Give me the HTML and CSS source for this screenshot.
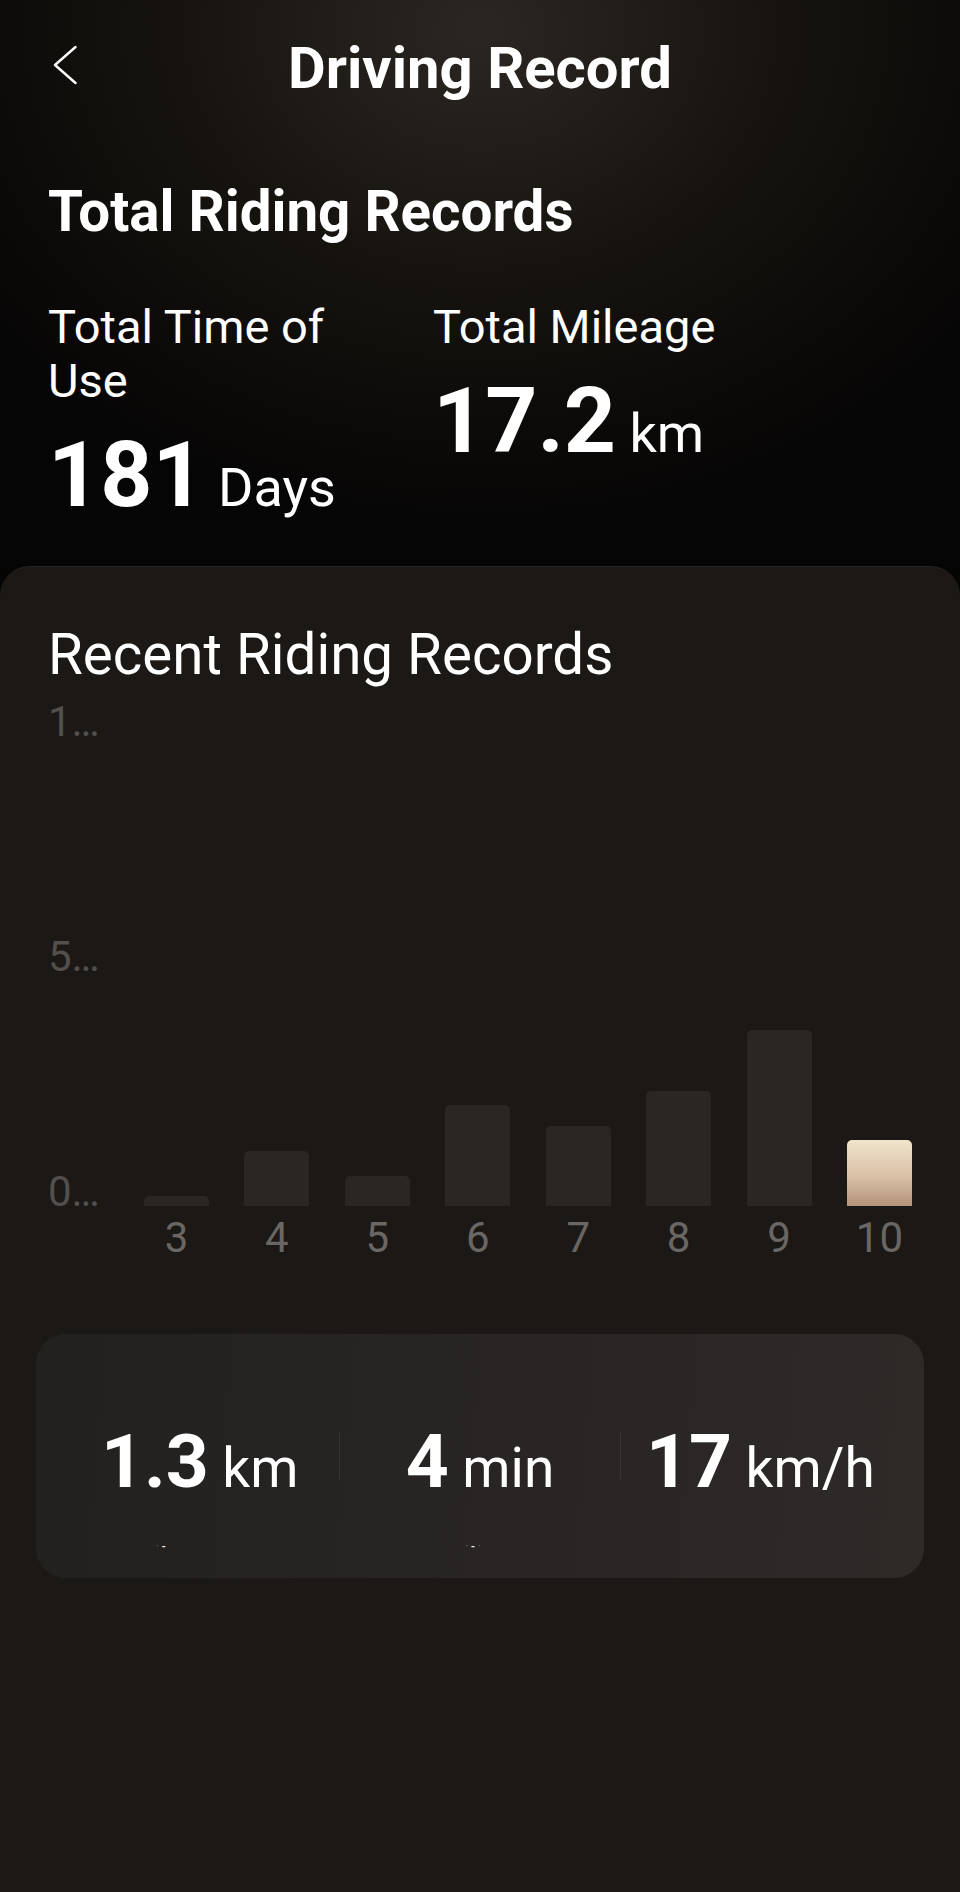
FILE: index.html
```html
<!DOCTYPE html>
<html lang="en">
<head>
    <meta charset="UTF-8">
    <meta name="viewport" content="width=device-width, initial-scale=1.0">
    <title>Driving Record</title>
    <link rel="stylesheet" href="styles.css">
</head>
<body>
    <div class="page">
        <!-- Top bar -->
        <header class="top-bar">
            <button class="back-btn" aria-label="Back">
                <svg width="24" height="40" viewBox="0 0 24 40">
                    <polyline points="22.5,2 2,20 22.5,38" fill="none" stroke="#fff" stroke-width="2.4" stroke-linecap="round" stroke-linejoin="round"/>
                </svg>
            </button>
            <h1>Driving Record</h1>
        </header>

        <!-- Totals -->
        <section class="totals">
            <h2>Total Riding Records</h2>
            <div class="totals-grid">
                <div class="total-item">
                    <p class="total-label">Total Time of Use</p>
                    <p class="total-value"><span class="big">181</span> Days</p>
                </div>
                <div class="total-item">
                    <p class="total-label">Total Mileage</p>
                    <p class="total-value"><span class="big">17.2</span> km</p>
                </div>
            </div>
        </section>

        <!-- Recent records -->
        <section class="recent">
            <h3>Recent Riding Records</h3>
            <div class="chart">
                <div class="y-axis">
                    <span>1…</span>
                    <span>5…</span>
                    <span>0…</span>
                </div>
                <div class="bars">
                    <div class="bar" style="height: 10px"></div>
                    <div class="bar" style="height: 55px"></div>
                    <div class="bar" style="height: 30px"></div>
                    <div class="bar" style="height: 101px"></div>
                    <div class="bar" style="height: 80px"></div>
                    <div class="bar" style="height: 115px"></div>
                    <div class="bar" style="height: 176px"></div>
                    <div class="bar active" style="height: 66px"></div>
                </div>
                <div class="x-axis">
                    <span>3</span>
                    <span>4</span>
                    <span>5</span>
                    <span>6</span>
                    <span>7</span>
                    <span>8</span>
                    <span>9</span>
                    <span>10</span>
                </div>
            </div>

            <div class="trip-card">
                <div class="trip-values">
                    <div class="trip-cell"><span class="trip-num">1.3</span> km</div>
                    <div class="trip-divider"></div>
                    <div class="trip-cell"><span class="trip-num">4</span> min</div>
                    <div class="trip-divider"></div>
                    <div class="trip-cell"><span class="trip-num">17</span> km/h</div>
                </div>
                <div class="trip-labels">
                    <span class="trip-label first"><i class="faint">·</i> -</span>
                    <span class="trip-label second"><i class="faint">·</i> - <i class="faint">·</i></span>
                    <span class="trip-label"></span>
                </div>
            </div>
        </section>
    </div>
</body>
</html>
```

FILE: styles.css
```css
* {
    box-sizing: border-box;
}

body {
    margin: 0;
    padding: 0;
    font-family: 'Roboto', 'Liberation Sans', sans-serif;
    background: #1b1816;
    color: #fff;
}

h1, h2, h3, p {
    margin: 0;
    font-weight: normal;
}

.page {
    min-height: 100vh;
    display: flex;
    flex-direction: column;
    background: radial-gradient(ellipse 620px 500px at 50% 30px, #2b2621 0%, #16130f 50%, #060505 100%);
    background-color: #060505;
}

/* top bar */
.top-bar {
    display: grid;
    grid-template-columns: 1fr auto 1fr;
    padding-top: 33px;
}

.back-btn {
    justify-self: start;
    align-self: start;
    margin: 12px 0 0 53px;
    padding: 0;
    border: none;
    background: none;
    cursor: pointer;
    line-height: 0;
}

.top-bar h1 {
    font-size: 58px;
    font-weight: bold;
    line-height: 70px;
}

/* totals */
.totals {
    padding: 0 48px;
}

.totals h2 {
    margin-top: 75px;
    font-size: 56.5px;
    font-weight: bold;
    line-height: 68px;
}

.totals-grid {
    display: grid;
    grid-template-columns: 385px 385px;
    margin-top: 54px;
}

.total-item {
    padding-right: 42px;
}

.total-label {
    font-size: 47px;
    line-height: 54px;
}

.total-value {
    margin-top: 22px;
    font-size: 54px;
    line-height: 1;
}

.total-value .big {
    font-size: 91px;
    font-weight: bold;
    line-height: 1;
}

/* recent panel */
.recent {
    flex: 1;
    margin-top: 45px;
    padding: 55px 48px 0;
    background: #1b1816;
    border-radius: 30px 30px 0 0;
    border-top: 1px solid #262321;
}

.recent h3 {
    font-size: 56.5px;
    line-height: 67px;
}

.chart {
    display: grid;
    grid-template-columns: 96px 1fr;
    grid-template-rows: 512px auto;
    margin-top: 12px;
}

.y-axis {
    display: flex;
    flex-direction: column;
    justify-content: space-between;
    color: #524f4c;
    font-size: 42px;
    line-height: 42px;
}

.bars {
    display: flex;
    justify-content: space-between;
    align-items: flex-end;
    padding-bottom: 7px;
}

.bar {
    width: 65px;
    background: #2a2624;
    border-radius: 5px 5px 0 0;
}

.bar.active {
    background: linear-gradient(to bottom, #f1e4cd, #d8c1a6 55%, #b4937a);
}

.x-axis {
    grid-column: 2;
    display: flex;
    justify-content: space-between;
    margin-top: 4px;
    color: #6a6663;
    font-size: 42px;
    line-height: 42px;
}

.x-axis span {
    width: 65px;
    text-align: center;
}

/* last trip card */
.trip-card {
    margin: 75px -12px 0;
    padding: 90px 24px 26px;
    border-radius: 30px;
    background: linear-gradient(95deg, #232120 0%, #282524 55%, #2e2a28 100%);
}

.trip-values {
    display: flex;
}

.trip-cell {
    flex: 1;
    text-align: center;
    font-size: 55px;
    line-height: 1;
    white-space: nowrap;
}

.trip-num {
    font-size: 75px;
    font-weight: bold;
    line-height: 1;
}

.trip-divider {
    width: 1px;
    height: 47px;
    margin-top: 8px;
    background: rgba(255, 255, 255, 0.07);
}

.trip-labels {
    display: flex;
    margin-top: 43px;
    font-size: 11px;
    font-weight: bold;
    line-height: 10px;
    color: #f0eeec;
}

.trip-label {
    flex: 1;
    text-align: center;
}

.trip-label.first {
    padding-right: 110px;
}

.trip-label.second {
    padding-right: 124px;
}

.faint {
    font-style: normal;
    font-weight: normal;
    color: #6b6866;
}
```
